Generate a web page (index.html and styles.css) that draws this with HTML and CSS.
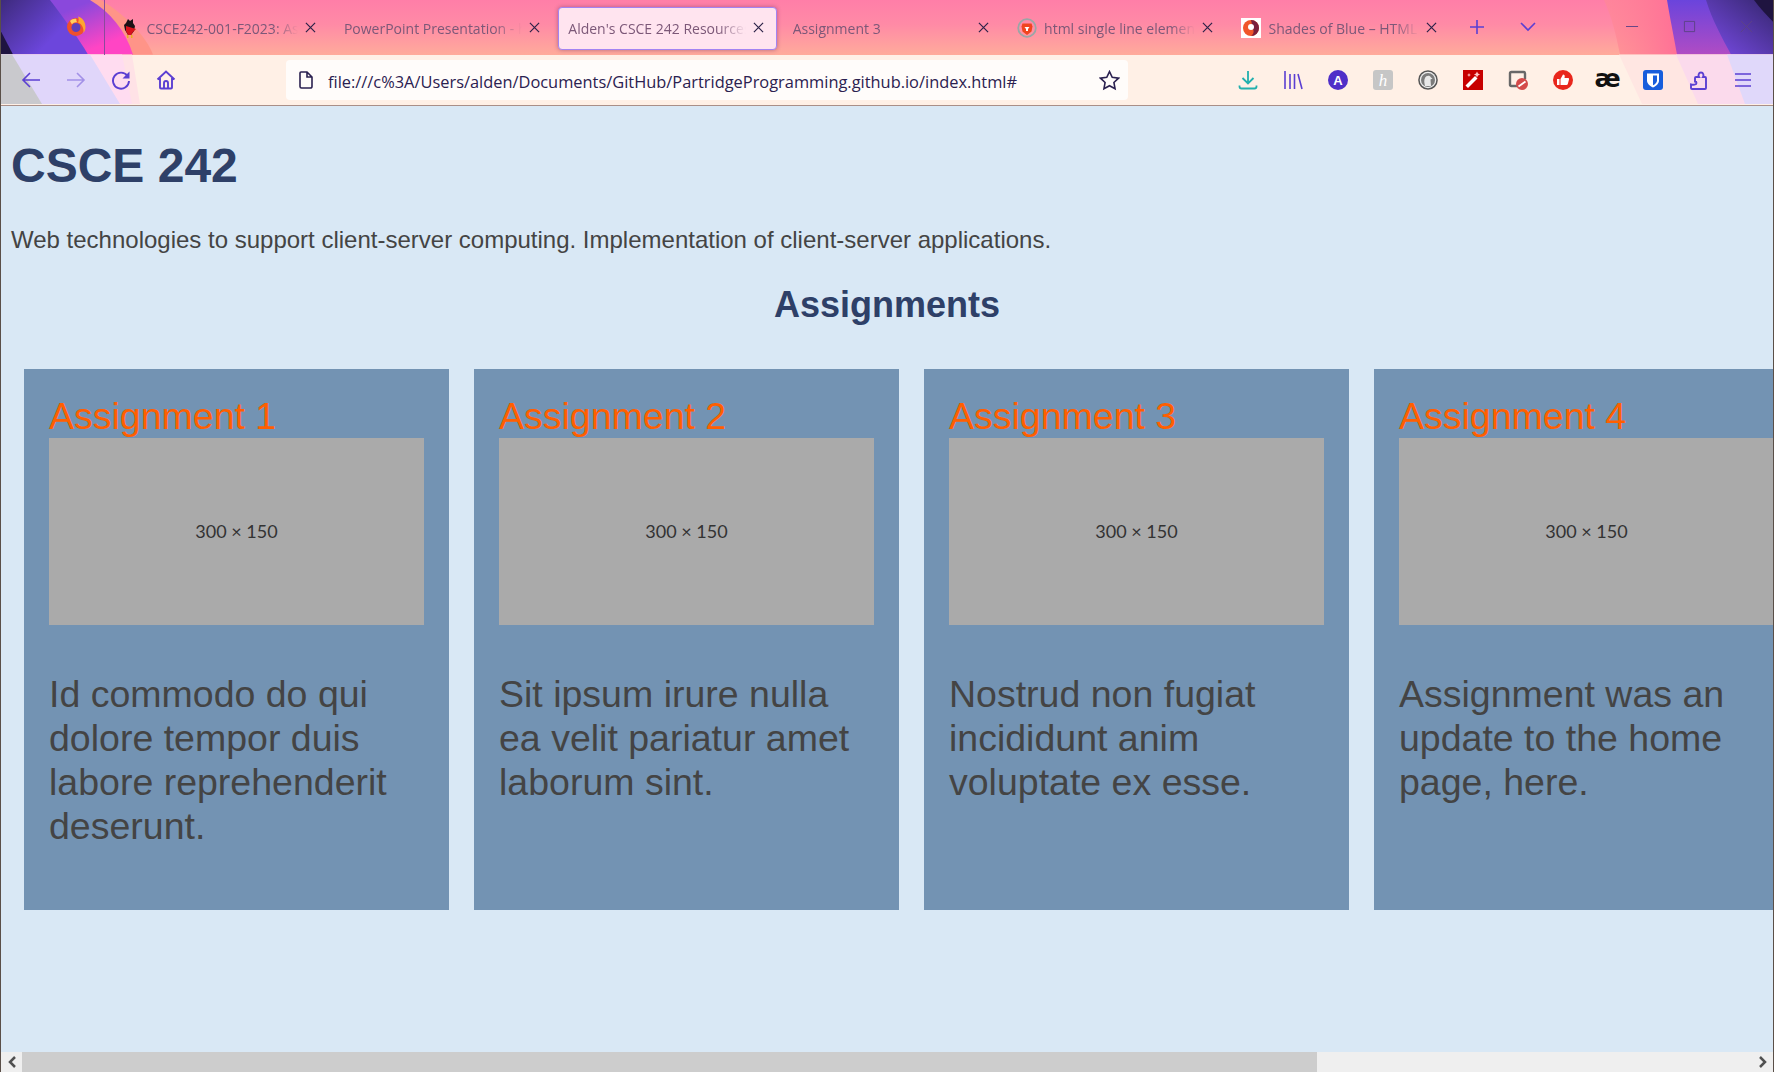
FILE: index.html
```html
<!DOCTYPE html>
<html lang="en">
<head>
<meta charset="utf-8">
<title>Alden's CSCE 242 Resources</title>
<link rel="stylesheet" href="styles.css">
</head>
<body>
<header class="chrome">
  <svg class="theme-art" viewBox="0 0 1774 106" preserveAspectRatio="none" aria-hidden="true">
    <defs>
      <linearGradient id="gPurple" x1="0" y1="0" x2="1" y2="0.6">
        <stop offset="0" stop-color="#3d2a7c"/><stop offset="0.75" stop-color="#6c46dc"/>
      </linearGradient>
      <linearGradient id="gMag" x1="0" y1="0" x2="1" y2="1">
        <stop offset="0.35" stop-color="#8a48dc"/><stop offset="0.8" stop-color="#ff45c4"/>
      </linearGradient>
      <linearGradient id="gRPink" x1="0" y1="0" x2="1" y2="0">
        <stop offset="0" stop-color="#ff8a92" stop-opacity="0.55"/><stop offset="0.45" stop-color="#ff6e96"/><stop offset="1" stop-color="#ff459e"/>
      </linearGradient>
      <linearGradient id="gRPurple" x1="0" y1="0" x2="0" y2="1">
        <stop offset="0" stop-color="#6a44dc"/><stop offset="1" stop-color="#b04cc4"/>
      </linearGradient>
      <linearGradient id="gRDark" x1="1" y1="0" x2="0" y2="1">
        <stop offset="0" stop-color="#35266e"/><stop offset="1" stop-color="#7a4ce8"/>
      </linearGradient>
    </defs>
    <path fill="#ff9488" d="M0 0H101C125 15 145 35 153 55H0Z"/>
    <path fill="url(#gMag)" d="M0 0H90C110 12 125 30 133 55H0Z"/>
    <path fill="url(#gPurple)" d="M0 0H50C65 20 78 38 88 55H0Z"/>
    <path fill="#1f1440" d="M0 30L13 55H0Z"/>
    <path fill="#ffe2e6" d="M0 55H132L140 105H0Z"/>
    <path fill="#ffdcf0" d="M0 55H122L132 105H0Z"/>
    <path fill="#e0d6fa" d="M0 55H90L120 105H0Z"/>
    <path fill="#c9c9cd" d="M0 55H12L42 105H0Z"/>
    <path fill="url(#gRPink)" d="M1604 0C1612 18 1616 35 1620 55H1774V0Z"/>
    <path fill="url(#gRPurple)" d="M1667 0C1670 18 1674 38 1677 55H1774V0Z"/>
    <path fill="url(#gRDark)" d="M1706 0C1712 20 1722 38 1731 55H1774V0Z"/>
    <path fill="#1f1440" d="M1754 0C1760 8 1767 16 1774 23V0Z"/>
    <path fill="#ffe6e2" d="M1619 55L1642 105H1774V55Z"/>
    <path fill="#fbdaec" d="M1676 55L1698 105H1774V55Z"/>
    <path fill="#e0d8fa" d="M1727 55L1745 105H1774V55Z"/>
  </svg>

  <div class="tabbar">
    <div class="app-slot">
      <svg class="icon-20" viewBox="0 0 20 20" aria-hidden="true">
        <circle cx="10" cy="11" r="9" fill="#f0502c"/>
        <path fill="#ffa62e" d="M12 .5c4 1 7.500 5 7.500 10.500 0 2.500-1 4.500-2 6 .5-5-1.500-9-5.500-10.500 1-2 .8-4.500 0-6z"/>
        <path fill="#ffd060" d="M4 5c1.500-1.500 4-2.500 6.500-2-.5 1 0 2.500 1 3.500-2-.5-4.500 0-5.500 2z"/>
        <circle cx="10" cy="11.500" r="4.500" fill="#5f3fbc"/>
      </svg>
    </div>
    <div class="tab">
      <svg class="favicon" viewBox="0 0 20 20" aria-hidden="true">
        <path fill="#1b1116" d="M8 1l2 2 3-2 0 4 2 3-1 5-3 4H8L5 12 4 7 6 5z"/>
        <path fill="#d8121c" d="M6 8l10 3-3 3-2 3H8L6 13z"/>
        <path fill="#e8b020" d="M7 17h1.500v3H7zM11 17h1.500v3H11z"/>
      </svg>
      <span class="tab-label">CSCE242-001-F2023: Assignments</span>
      <svg class="tab-close" viewBox="0 0 12 12" aria-hidden="true"><path d="M1 1l10 10M11 1L1 11"/></svg>
    </div>
    <div class="tab">
      <span class="tab-label">PowerPoint Presentation - https://</span>
      <svg class="tab-close" viewBox="0 0 12 12" aria-hidden="true"><path d="M1 1l10 10M11 1L1 11"/></svg>
    </div>
    <div class="tab tab-active">
      <span class="tab-label">Alden's CSCE 242 Resources</span>
      <svg class="tab-close" viewBox="0 0 12 12" aria-hidden="true"><path d="M1 1l10 10M11 1L1 11"/></svg>
    </div>
    <div class="tab">
      <span class="tab-label">Assignment 3</span>
      <svg class="tab-close" viewBox="0 0 12 12" aria-hidden="true"><path d="M1 1l10 10M11 1L1 11"/></svg>
    </div>
    <div class="tab">
      <svg class="favicon" viewBox="0 0 20 20" aria-hidden="true">
        <circle cx="10" cy="10" r="8.800" fill="none" stroke="#9aa6a6" stroke-width="1.800"/>
        <path fill="#f0451f" d="M5.500 5.500h9l1 3-1 5-4.500 3.500-4.500-3.500-1-5z"/>
        <path fill="#fff" d="M7.500 9h5l-1.500 2v2H9v-2z"/>
      </svg>
      <span class="tab-label">html single line element</span>
      <svg class="tab-close" viewBox="0 0 12 12" aria-hidden="true"><path d="M1 1l10 10M11 1L1 11"/></svg>
    </div>
    <div class="tab">
      <svg class="favicon" viewBox="0 0 20 20" aria-hidden="true">
        <rect width="20" height="20" fill="#fff"/>
        <circle cx="10" cy="10" r="8" fill="#f0562a"/>
        <path fill="#7a1f3c" d="M10 2a8 8 0 0 1 0 16c3-2 3-5 2-7z"/>
        <circle cx="10" cy="9" r="3" fill="#fff"/>
      </svg>
      <span class="tab-label">Shades of Blue – HTML Color</span>
      <svg class="tab-close" viewBox="0 0 12 12" aria-hidden="true"><path d="M1 1l10 10M11 1L1 11"/></svg>
    </div>
    <button class="tabbar-btn" aria-label="New tab">
      <svg class="icon-16 stroke-accent" viewBox="0 0 16 16" aria-hidden="true"><path d="M8 1v14M1 8h14"/></svg>
    </button>
    <button class="tabbar-btn" aria-label="List tabs">
      <svg class="icon-16 stroke-accent" viewBox="0 0 16 16" aria-hidden="true"><path d="M1 4l7 7 7-7"/></svg>
    </button>
    <div class="window-controls">
      <svg class="win-icon" viewBox="0 0 14 14" aria-hidden="true"><path d="M0 7h13"/></svg>
      <svg class="win-icon" viewBox="0 0 14 14" aria-hidden="true"><path d="M1.500 1.500h11v11h-11z"/></svg>
      <svg class="win-icon" viewBox="0 0 14 14" aria-hidden="true"><path d="M1 1l12 12M13 1L1 13"/></svg>
    </div>
  </div>

  <div class="toolbar">
    <div class="nav-group">
      <button class="tool" aria-label="Back">
        <svg class="icon-20 stroke-accent" viewBox="0 0 20 20" aria-hidden="true"><path d="M19 10H2M9 3l-7 7 7 7"/></svg>
      </button>
      <button class="tool tool-dim" aria-label="Forward">
        <svg class="icon-20 stroke-accent" viewBox="0 0 20 20" aria-hidden="true"><path d="M1 10h17M11 3l7 7-7 7"/></svg>
      </button>
      <button class="tool" aria-label="Reload">
        <svg class="icon-20 stroke-accent stroke-heavy" viewBox="0 0 20 20" aria-hidden="true"><path d="M16.500 6A8 8 0 1 0 18 11"/><path class="fill-accent" d="M18.500 1.500v7h-7z"/></svg>
      </button>
      <button class="tool" aria-label="Home">
        <svg class="icon-20 stroke-accent stroke-heavy" viewBox="0 0 20 20" aria-hidden="true"><path d="M1.500 9.500L10 1.500l8.500 8M4 8v9.500a1 1 0 0 0 1 1h10a1 1 0 0 0 1-1V8M8 18.500V13a2 2 0 0 1 4 0v5.500"/></svg>
      </button>
    </div>
    <div class="urlbar">
      <svg class="url-page" viewBox="0 0 16 18" aria-hidden="true"><path d="M3 1h6l5 5v9.500a1.500 1.500 0 0 1-1.500 1.500h-9A1.500 1.500 0 0 1 2 15.500V2a1 1 0 0 1 1-1zM9 1v5h5"/></svg>
      <span class="url-text">file:///c%3A/Users/alden/Documents/GitHub/PartridgeProgramming.github.io/index.html#</span>
      <svg class="url-star" viewBox="0 0 20 20" aria-hidden="true"><path d="M10 1.500l2.600 5.500 6 .8-4.400 4.100 1.100 6L10 15l-5.300 2.900 1.100-6L1.400 7.800l6-.8z"/></svg>
    </div>
    <div class="tool-group">
      <button class="tool" aria-label="Downloads">
        <svg class="icon-20 stroke-teal" viewBox="0 0 20 20" aria-hidden="true"><path d="M10 1v12M4.500 8l5.500 5.500L15.500 8M1.500 15.500v1a2 2 0 0 0 2 2h13a2 2 0 0 0 2-2v-1"/></svg>
      </button>
      <button class="tool" aria-label="Library">
        <svg class="icon-20 stroke-accent" viewBox="0 0 20 20" aria-hidden="true"><path d="M2 1v18M7 4v15M11.500 4v15M15 4l4 15"/></svg>
      </button>
      <button class="tool" aria-label="Extension A">
        <svg class="icon-20" viewBox="0 0 20 20" aria-hidden="true"><circle cx="10" cy="10" r="10" fill="#4f2fc8"/><text class="badge-a" x="10" y="14.500" text-anchor="middle">A</text></svg>
      </button>
      <button class="tool" aria-label="Honey">
        <svg class="icon-20" viewBox="0 0 20 20" aria-hidden="true"><rect width="20" height="20" rx="3" fill="#c6c6c6"/><text class="badge-h" x="10" y="15.500" text-anchor="middle">h</text></svg>
      </button>
      <button class="tool" aria-label="DuckDuckGo">
        <svg class="icon-20" viewBox="0 0 20 20" aria-hidden="true"><circle cx="10" cy="10" r="9.800" fill="#555"/><circle cx="10" cy="10" r="8.300" fill="#eee"/><circle cx="10" cy="10" r="7" fill="#7b7b7b"/><path fill="#e8e8e8" d="M7 16c-1-4-1-6 0-8 1-2.500 5-3 6-.5l1.500 1-2 1 .5 6.500z"/></svg>
      </button>
      <button class="tool" aria-label="Wand">
        <svg class="icon-20" viewBox="0 0 20 20" aria-hidden="true"><rect width="20" height="20" fill="#c70000"/><path fill="#fff" d="M2.500 15.500L12 6l2.500 2.500L5 18z"/><path fill="#ffc8c8" d="M14 1.500l1 2 2 1-2 1-1 2-1-2-2-1 2-1zM6 3l.6 1.400L8 5l-1.400.6L6 7l-.6-1.400L4 5l1.400-.6z"/></svg>
      </button>
      <button class="tool" aria-label="Blocker">
        <svg class="icon-20" viewBox="0 0 20 20" aria-hidden="true"><path fill="none" stroke="#686868" stroke-width="2.400" d="M9 16H3.500A1.500 1.500 0 0 1 2 14.500v-11A1.500 1.500 0 0 1 3.500 2h12A1.500 1.500 0 0 1 17 3.500V9"/><circle cx="14" cy="14" r="6" fill="#d44a4a"/><path stroke="#fff" stroke-width="1.800" d="M10.500 16.500l7-5"/></svg>
      </button>
      <button class="tool" aria-label="Thumbs">
        <svg class="icon-20" viewBox="0 0 20 20" aria-hidden="true"><circle cx="10" cy="10" r="10" fill="#e8261c"/><path fill="#fff" d="M4 9h2.500v6H4zM7.500 9l2.500-4.500c1.500 0 2 1 1.700 2.300L11.500 8H15c.8 0 1.200.7 1 1.500l-1.200 4.500c-.2.600-.7 1-1.300 1h-6z"/></svg>
      </button>
      <button class="tool tool-text" aria-label="ae">æ</button>
      <button class="tool" aria-label="Bitwarden">
        <svg class="icon-20" viewBox="0 0 20 20" aria-hidden="true"><rect width="20" height="20" rx="3" fill="#175ddc"/><path fill="#fff" d="M4 3.500h12v7c0 3.500-3 5.500-6 7-3-1.500-6-3.500-6-7z"/><path fill="#175ddc" d="M10 5.500h4v5c0 2.300-2 3.700-4 4.800z"/></svg>
      </button>
      <button class="tool" aria-label="Extensions">
        <svg class="icon-20 stroke-accent stroke-heavy" viewBox="0 0 20 20" aria-hidden="true"><path d="M7 11.500V8a1 1 0 0 1 1-1h3c-1-1.500-.5-4.500 2-4.500s3 3 2 4.500h2a1 1 0 0 1 1 1v10a1 1 0 0 1-1 1H4a1 1 0 0 1-1-1v-3.500c2 .5 5.500.5 5.500-1.500 0-1-.5-1.500-1.500-1.500z"/></svg>
      </button>
      <button class="tool" aria-label="Menu">
        <svg class="icon-20 stroke-accent" viewBox="0 0 20 20" aria-hidden="true"><path d="M2 4h16M2 10h16M2 16h16"/></svg>
      </button>
    </div>
  </div>
</header>

<main class="page">
  <h1 class="page-title">CSCE 242</h1>
  <p class="page-intro">Web technologies to support client-server computing. Implementation of client-server applications.</p>
  <h2 class="section-title">Assignments</h2>
  <section class="cards">
    <article class="card">
      <h3 class="card-title">Assignment 1</h3>
      <div class="placeholder">300 × 150</div>
      <p class="card-text">Id commodo do qui dolore tempor duis labore reprehenderit deserunt.</p>
    </article>
    <article class="card">
      <h3 class="card-title">Assignment 2</h3>
      <div class="placeholder">300 × 150</div>
      <p class="card-text">Sit ipsum irure nulla ea velit pariatur amet laborum sint.</p>
    </article>
    <article class="card">
      <h3 class="card-title">Assignment 3</h3>
      <div class="placeholder">300 × 150</div>
      <p class="card-text">Nostrud non fugiat incididunt anim voluptate ex esse.</p>
    </article>
    <article class="card">
      <h3 class="card-title">Assignment 4</h3>
      <div class="placeholder">300 × 150</div>
      <p class="card-text">Assignment was an update to the home page, here.</p>
    </article>
  </section>
</main>

<div class="scrollbar">
  <div class="scroll-btn"><svg class="scroll-arrow" viewBox="0 0 10 12" aria-hidden="true"><path d="M8 1L3 6l5 5"/></svg></div>
  <div class="scroll-thumb"></div>
  <div class="scroll-track"><svg class="scroll-arrow" viewBox="0 0 10 12" aria-hidden="true"><path d="M2 1l5 5-5 5"/></svg></div>
</div>
</body>
</html>
```
FILE: styles.css
```css
* { box-sizing: border-box; }
html, body { margin: 0; height: 100%; }
body {
  display: flex;
  flex-direction: column;
  height: 100vh;
  overflow: hidden;
  background: #d9e8f5;
  font-family: "Liberation Sans", Arial, sans-serif;
  border-left: 1px solid #5a4f48;
  border-right: 1px solid #5a4f48;
}
button { border: 0; background: none; padding: 0; font: inherit; }

/* Browser chrome */
.chrome {
  position: relative;
  flex: none;
  height: 106px;
  background: linear-gradient(to bottom, #ff7ea8 0, #ff8aa6 24px, #ffab9b 55px, #fff0e6 55px, #fff0e6 105px, #a98f88 105px);
  font-family: "Open Sans", "Noto Sans", sans-serif;
}
.theme-art { position: absolute; inset: 0 0 1px -1px; width: 1774px; height: 105px; }
.tabbar, .toolbar { position: relative; display: flex; align-items: center; }
.tabbar { height: 55px; }
.toolbar { height: 50px; }

.icon-20 { width: 20px; height: 20px; display: block; }
.icon-16 { width: 16px; height: 16px; display: block; }
.stroke-accent { fill: none; stroke: #5b3fd2; stroke-width: 1.6; }
.stroke-heavy { stroke-width: 1.9; }
.stroke-accent .fill-accent { fill: #5b3fd2; stroke: none; }
.stroke-teal { fill: none; stroke: #22b0ae; stroke-width: 1.8; }

.app-slot {
  width: 108.500px;
  height: 55px;
  flex: none;
  display: flex;
  align-items: center;
  padding: 0 0 3px 65px;
  position: relative;
}
.app-slot::after {
  content: "";
  position: absolute;
  left: 103px;
  top: 0;
  bottom: 0;
  width: 1px;
  background: #8a4a9c;
}
.tab {
  flex: none;
  width: 219px;
  height: 43px;
  margin: 1px 5.400px 0 0;
  padding: 0 12px 0 9px;
  display: flex;
  align-items: center;
  gap: 7px;
  border: 1px solid transparent;
  border-radius: 4px;
  color: #7c5878;
  font-size: 14px;
}
.tab-active {
  background: #ffe4ef;
  border-color: #a383f2;
  box-shadow: 0 0 4px rgba(90, 40, 90, 0.45);
}
.favicon { width: 20px; height: 20px; flex: none; }
.tab-label {
  flex: 1;
  min-width: 0;
  white-space: nowrap;
  overflow: hidden;
  -webkit-mask-image: linear-gradient(to right, #000 84%, transparent 100%);
  mask-image: linear-gradient(to right, #000 84%, transparent 100%);
}
.tab-close {
  width: 11px;
  height: 11px;
  flex: none;
  fill: none;
  stroke: #2c2248;
  stroke-width: 1.3;
  margin-top: -1px;
}
.tabbar-btn {
  flex: none;
  width: 51px;
  height: 40px;
  display: flex;
  align-items: center;
  justify-content: center;
  margin-top: -1px;
}
.tabbar-btn:first-of-type { margin-left: -4px; }
.window-controls {
  margin-left: 72px;
  display: flex;
  gap: 44px;
  align-items: center;
  margin-top: -3px;
}
.win-icon {
  width: 13px;
  height: 13px;
  flex: none;
  fill: none;
  stroke: #5d4285;
  stroke-width: 1;
}

.nav-group, .tool-group { display: flex; align-items: center; flex: none; }
.nav-group { padding-left: 7px; }
.tool-group { margin-left: 97px; }
.tool {
  width: 45px;
  height: 40px;
  display: flex;
  align-items: center;
  justify-content: center;
  flex: none;
}
.tool-dim { opacity: 0.45; }
.tool-text {
  font-family: "DejaVu Sans", sans-serif;
  font-size: 25px;
  font-weight: 700;
  color: #111;
  line-height: 1;
  padding-bottom: 4px;
}
.badge-a { font: 700 13px "Liberation Sans", sans-serif; fill: #fff; }
.badge-h { font: italic 400 17px "Liberation Serif", serif; fill: #fff; }

.urlbar {
  margin-left: 98px;
  width: 842px;
  height: 40px;
  flex: none;
  display: flex;
  align-items: center;
  padding: 0 8px 0 12px;
  background: #fffcfa;
  border-radius: 4px;
}
.url-page {
  width: 16px;
  height: 18px;
  flex: none;
  fill: none;
  stroke: #2b2150;
  stroke-width: 1.600;
}
.url-text {
  flex: 1;
  margin-left: 14px;
  padding-top: 2px;
  color: #2b2150;
  font-size: 16.400px;
  white-space: nowrap;
  overflow: hidden;
}
.url-star {
  width: 21px;
  height: 21px;
  flex: none;
  fill: none;
  stroke: #2b2150;
  stroke-width: 1.500;
}

/* Page */
.page {
  flex: 1;
  min-height: 0;
  overflow: hidden;
  padding: 32px 0 0 10px;
}
.page-title {
  margin: 0;
  font-size: 48px;
  line-height: 55px;
  font-weight: 700;
  color: #2e4068;
}
.page-intro {
  margin: 33px 0 0;
  font-size: 24px;
  line-height: 28px;
  color: #444;
}
.section-title {
  margin: 30px 0 0 -10px;
  font-size: 36px;
  line-height: 41px;
  font-weight: 700;
  color: #2e4068;
  text-align: center;
}
.cards {
  margin: 44px 0 0 13px;
  display: flex;
  gap: 25px;
  align-items: stretch;
}
.card {
  flex: none;
  width: 425px;
  padding: 25px;
  background: #7393b3;
}
.card-title {
  margin: 0;
  font-size: 37.500px;
  line-height: 44px;
  font-weight: 400;
  color: #ff5f00;
}
.placeholder {
  height: 187px;
  padding-bottom: 2px;
  display: flex;
  align-items: center;
  justify-content: center;
  background: #aaa;
  color: #333;
  font-family: Lato, "Open Sans", sans-serif;
  font-size: 18px;
}
.card-text {
  margin: 47px 0 37px;
  font-size: 37.500px;
  line-height: 44px;
  color: #444;
}

/* Horizontal scrollbar */
.scrollbar {
  flex: none;
  height: 20px;
  display: flex;
  background: #efefef;
}
.scroll-btn {
  width: 21px;
  display: flex;
  align-items: center;
  justify-content: center;
}
.scroll-thumb { width: 1295px; background: #cdcdcd; }
.scroll-track {
  flex: 1;
  display: flex;
  align-items: center;
  justify-content: flex-end;
  padding-right: 5px;
}
.scroll-arrow {
  width: 10px;
  height: 12px;
  fill: none;
  stroke: #505050;
  stroke-width: 2.500;
}
```
